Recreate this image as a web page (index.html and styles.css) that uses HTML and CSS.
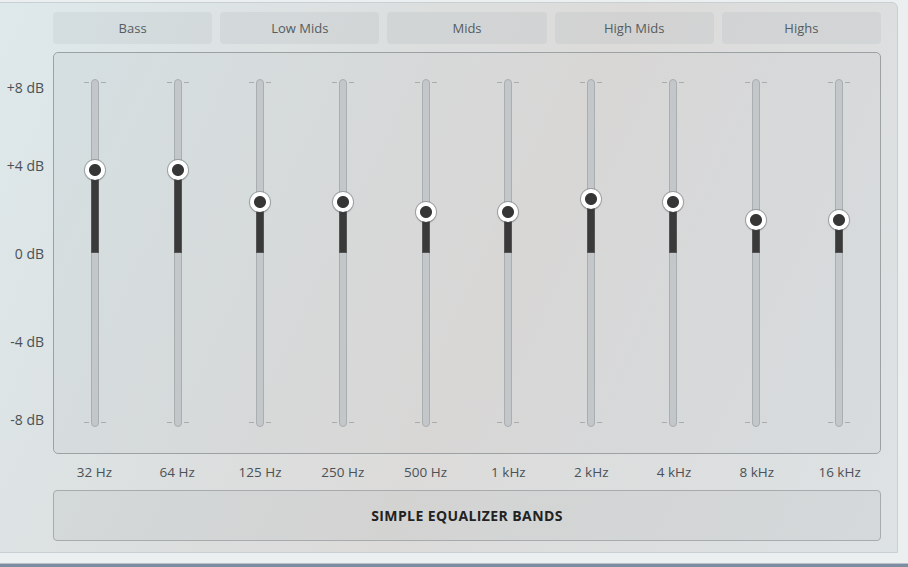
FILE: index.html
```html
<!DOCTYPE html>
<html>
<head>
<meta charset="utf-8">
<link rel="stylesheet" href="styles.css">
</head>
<body>
<div class="panel">
  <div class="tabs">
    <div class="tab">Bass</div>
    <div class="tab">Low Mids</div>
    <div class="tab">Mids</div>
    <div class="tab">High Mids</div>
    <div class="tab">Highs</div>
  </div>
  <div class="scale">
    <div class="db db1">+8 dB</div>
    <div class="db db2">+4 dB</div>
    <div class="db db3">0 dB</div>
    <div class="db db4">-4 dB</div>
    <div class="db db5">-8 dB</div>
  </div>
  <div class="box">
    <div class="band" style="--db:3.8"><div class="tick top"></div><div class="tick bottom"></div><div class="track"><div class="fill"></div></div><div class="knob"></div></div>
    <div class="band" style="--db:3.8"><div class="tick top"></div><div class="tick bottom"></div><div class="track"><div class="fill"></div></div><div class="knob"></div></div>
    <div class="band" style="--db:2.35"><div class="tick top"></div><div class="tick bottom"></div><div class="track"><div class="fill"></div></div><div class="knob"></div></div>
    <div class="band" style="--db:2.35"><div class="tick top"></div><div class="tick bottom"></div><div class="track"><div class="fill"></div></div><div class="knob"></div></div>
    <div class="band" style="--db:1.9"><div class="tick top"></div><div class="tick bottom"></div><div class="track"><div class="fill"></div></div><div class="knob"></div></div>
    <div class="band" style="--db:1.9"><div class="tick top"></div><div class="tick bottom"></div><div class="track"><div class="fill"></div></div><div class="knob"></div></div>
    <div class="band" style="--db:2.5"><div class="tick top"></div><div class="tick bottom"></div><div class="track"><div class="fill"></div></div><div class="knob"></div></div>
    <div class="band" style="--db:2.35"><div class="tick top"></div><div class="tick bottom"></div><div class="track"><div class="fill"></div></div><div class="knob"></div></div>
    <div class="band" style="--db:1.5"><div class="tick top"></div><div class="tick bottom"></div><div class="track"><div class="fill"></div></div><div class="knob"></div></div>
    <div class="band" style="--db:1.5"><div class="tick top"></div><div class="tick bottom"></div><div class="track"><div class="fill"></div></div><div class="knob"></div></div>
  </div>
  <div class="freqs">
    <div>32 Hz</div><div>64 Hz</div><div>125 Hz</div><div>250 Hz</div><div>500 Hz</div>
    <div>1 kHz</div><div>2 kHz</div><div>4 kHz</div><div>8 kHz</div><div>16 kHz</div>
  </div>
  <div class="foot">SIMPLE EQUALIZER BANDS</div>
</div>
<div class="taskbar"></div>
</body>
</html>
```
FILE: styles.css
```css
html, body {
  margin: 0;
  height: 567px;
  overflow: hidden;
}
body {
  background: #eceff0;
  padding-top: 2px;
  box-sizing: border-box;
  font-family: "Open Sans", "Noto Sans", sans-serif;
  font-size: 13px;
  color: #52585c;
}
.panel {
  margin-left: -1px;
  width: 899px;
  height: 551px;
  box-sizing: border-box;
  border: 1px solid #c9d0d3;
  border-radius: 0 6px 0 0;
  background: linear-gradient(115deg, #dee9eb 0%, #dcdfdf 35%, #dcdbda 55%, #dde2e4 100%);
  padding-top: 9px;
  display: grid;
  grid-template-columns: 53px 828px;
  grid-template-rows: 32px 8px 402px 36px 51px;
  grid-template-areas:
    ". tabs"
    ". ."
    "scale box"
    ". freqs"
    ". foot";
}
.tabs {
  grid-area: tabs;
  display: flex;
  gap: 8px;
}
.tab {
  flex: 1;
  border-radius: 4px;
  background: rgba(110, 125, 130, 0.09);
  display: flex;
  align-items: center;
  justify-content: center;
  color: #565c61;
  font-weight: 500;
}
.scale {
  grid-area: scale;
  display: flex;
  flex-direction: column;
  align-items: flex-end;
  padding-right: 9px;
}
.db {
  line-height: 16px;
  height: 16px;
  color: #4b5156;
  font-size: 14px;
  font-weight: 500;
}
.db1 { margin-top: 28px; }
.db2 { margin-top: 62px; }
.db3 { margin-top: 72px; }
.db4 { margin-top: 72px; }
.db5 { margin-top: 62px; }
.box {
  grid-area: box;
  border: 1px solid #9ca1a4;
  border-radius: 5px;
  background: linear-gradient(115deg, rgba(150,165,170,0.12), rgba(0,0,0,0.02) 50%, rgba(120,130,140,0.06));
  display: grid;
  grid-template-columns: repeat(10, 1fr);
  padding: 26px 0;
}
.band {
  position: relative;
  display: flex;
  justify-content: center;
}
.track {
  position: relative;
  width: 8px;
  box-sizing: border-box;
  border: 1px solid #a9aeb1;
  border-radius: 4px;
  background: #c3c7c9;
}
.fill {
  position: absolute;
  left: -1px;
  right: -1px;
  top: calc((8 - var(--db)) / 16 * 100%);
  height: calc(var(--db) / 16 * 100%);
  background: #3a3a3a;
  border: 1px solid #555;
  box-sizing: border-box;
}
.knob {
  position: absolute;
  left: 50%;
  top: calc((8 - var(--db)) / 16 * 100%);
  width: 20px;
  height: 20px;
  margin: -10px 0 0 -10px;
  box-sizing: border-box;
  border-radius: 50%;
  background: radial-gradient(circle, #363636 0, #363636 5.5px, #fff 6.5px);
  box-shadow: 0 0 0 1px rgba(90, 95, 100, 0.4), 0 1px 2px rgba(0,0,0,0.25);
}
.tick {
  position: absolute;
  left: 50%;
  width: 22px;
  margin-left: -11px;
  height: 1px;
  background: linear-gradient(to right, #a8acae 5px, transparent 5px, transparent 17px, #a8acae 17px);
}
.tick.top { top: 3px; }
.tick.bottom { bottom: 4px; }
.freqs {
  grid-area: freqs;
  display: grid;
  grid-template-columns: repeat(10, 1fr);
  align-items: center;
  text-align: center;
  color: #4b5156;
  font-size: 13.5px;
  font-weight: 500;
}
.foot {
  grid-area: foot;
  border: 1px solid #a8abad;
  border-radius: 4px;
  background: rgba(150, 155, 160, 0.12);
  display: flex;
  align-items: center;
  justify-content: center;
  font-weight: 700;
  font-size: 14px;
  color: #222;
  letter-spacing: 0.4px;
}
.taskbar {
  margin-top: 10px;
  height: 5px;
  background: #7c8ca1;
  border-top: 1px solid #b9c0c8;
}
```
